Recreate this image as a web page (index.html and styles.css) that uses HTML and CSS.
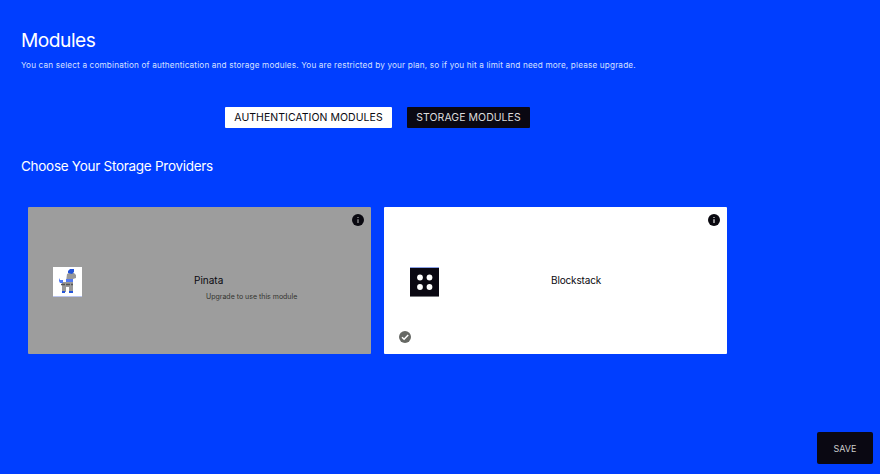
FILE: index.html
```html
<!DOCTYPE html>
<html lang="en">
<head>
<meta charset="utf-8">
<title>Modules</title>
<link rel="stylesheet" href="styles.css">
</head>
<body>
<main class="page">
  <h1 class="title">Modules</h1>
  <p class="intro">You can select a combination of authentication and storage modules. You are restricted by your plan, so if you hit a limit and need more, please upgrade.</p>
  <nav class="tabs">
    <button class="tab tab-auth">AUTHENTICATION MODULES</button>
    <button class="tab tab-storage">STORAGE MODULES</button>
  </nav>
  <h2 class="subtitle">Choose Your Storage Providers</h2>
  <section class="cards">
    <article class="card card-locked">
      <svg class="info" viewBox="0 0 12 12"><circle cx="6" cy="6" r="6" fill="#0a0910"/><path d="M6 5.2v3.8M6 3v1.1" stroke="#aaa" stroke-width="1.1"/></svg>
      <svg class="logo" viewBox="0 0 29 30">
        <path fill="#fff" d="M0 0h29v30H0z"/>
        <path d="M0 29.500h29" stroke="#b9c4ee"/>
        <path fill="#999" d="M14 7l2-1h5l2 2v3l-3 1v13h-4v-5h-3v5H9V15h4z"/>
        <path fill="#2454d8" d="M15 6V4l2-2h4v3l-2 2zM9 24h3v2H9zM16 24h4v2h-4z"/>
        <path fill="#5279f0" d="M13 12h7v3h-7zM6 11l1 2h3v3H7l-1-2z"/>
        <path d="M8 17.500h12" stroke="#555" stroke-width="1.500" stroke-dasharray="4 1"/>
      </svg>
      <div class="copy">
        <div class="name">Pinata</div>
        <div class="note">Upgrade to use this module</div>
      </div>
    </article>
    <article class="card card-active">
      <svg class="info" viewBox="0 0 12 12"><circle cx="6" cy="6" r="6" fill="#0a0910"/><path d="M6 5.200v3.800M6 3v1.100" stroke="#d5d5d5" stroke-width="1.300"/></svg>
      <svg class="logo" viewBox="0 0 29 30">
        <path fill="#0a0812" d="M0 0h29v30H0z"/>
        <path d="M0 .5h29" stroke="#8ca2e8"/>
        <path d="M0 29.500h29" stroke="#77777c"/>
        <g fill="#fff"><circle cx="10" cy="10.500" r="2.900"/><circle cx="19.500" cy="10.500" r="2.900"/><circle cx="10" cy="20" r="2.900"/><circle cx="19.500" cy="20" r="2.900"/></g>
      </svg>
      <div class="copy">
        <div class="name">Blockstack</div>
      </div>
      <svg class="check" viewBox="0 0 12 12"><circle cx="6" cy="6" r="6" fill="#666864"/><path d="M3 6.200l2.100 2.100L9.200 4" fill="none" stroke="#fff" stroke-width="1.500"/></svg>
    </article>
  </section>
</main>
<button class="save">SAVE</button>
</body>
</html>
```
FILE: styles.css
```css
* {
  box-sizing: border-box;
}
body {
  margin: 0;
  height: 474px;
  overflow: hidden;
  background: #003eff;
  font-family: Inter, "Liberation Sans", sans-serif;
  color: #fff;
}
.page {
  padding: 28px 21px 0;
}
.title {
  margin: 0;
  font-size: 19.2px;
  line-height: 24px;
  font-weight: 400;
  letter-spacing: -0.5px;
}
.intro {
  margin: 7px 0 0;
  font-size: 8.2px;
  line-height: 12px;
  white-space: nowrap;
  letter-spacing: 0.16px;
  color: #d6e0ff;
}
.tabs {
  display: flex;
  gap: 15px;
  margin: 36px 0 0 204px;
}
.tab {
  height: 21px;
  padding: 1px 0 0;
  border: 0;
  border-radius: 1px;
  font: 400 10.5px/20px Inter, sans-serif;
  letter-spacing: 0.04px;
  white-space: nowrap;
}
.tab-auth {
  width: 167px;
  background: #fff;
  color: #0a0910;
}
.tab-storage {
  width: 123px;
  background: #0a0812;
  color: #ddd;
}
.subtitle {
  margin: 28px 0 0;
  font-size: 13.5px;
  line-height: 20px;
  font-weight: 400;
  letter-spacing: -0.28px;
}
.cards {
  display: flex;
  gap: 13px;
  margin: 31px 0 0 7px;
}
.card {
  position: relative;
  width: 343px;
  height: 147px;
  padding: 60px 0 0 25px;
  display: flex;
  align-items: flex-start;
  border-radius: 1px;
  background: #fff;
  color: #0a0910;
}
.card-locked {
  background: #9d9d9d;
}
.card-active {
  padding-left: 26px;
}
.info {
  position: absolute;
  top: 6.5px;
  right: 7px;
  width: 12px;
  height: 12px;
}
.logo {
  width: 29px;
  height: 30px;
}
.copy {
  margin: 6px 0 0 112px;
}
.name {
  font-size: 10px;
  line-height: 14px;
}
.card-active .name {
  letter-spacing: -0.15px;
}
.note {
  margin: 4px 0 0 12px;
  font-size: 7px;
  line-height: 12px;
  white-space: nowrap;
  color: #33342f;
}
.check {
  position: absolute;
  left: 15px;
  bottom: 11px;
  width: 12px;
  height: 12px;
}
.save {
  position: fixed;
  right: 7px;
  bottom: 10px;
  width: 56px;
  height: 32px;
  padding: 1px 0 0;
  border: 0;
  border-radius: 2px;
  background: #0a0812;
  color: #ccc;
  font: 400 9px/31px Inter, sans-serif;
}
```
